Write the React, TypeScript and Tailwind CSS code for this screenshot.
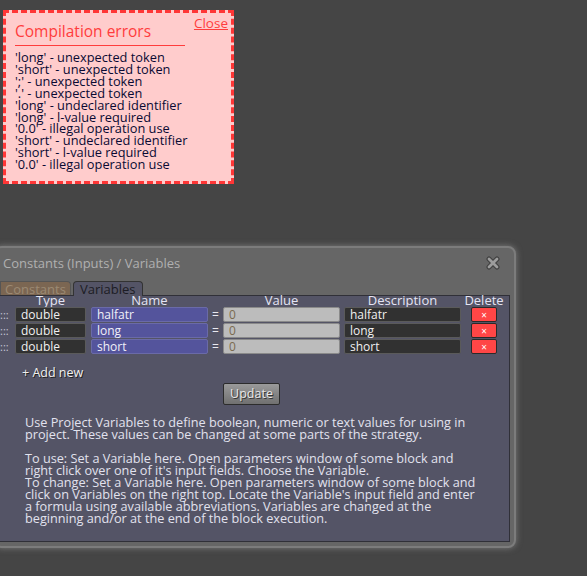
import React from 'react';

const errors = [
  "'long' - unexpected token",
  "'short' - unexpected token",
  "';' - unexpected token",
  "'.' - unexpected token",
  "'long' - undeclared identifier",
  "'long' - l-value required",
  "'0.0' - illegal operation use",
  "'short' - undeclared identifier",
  "'short' - l-value required",
  "'0.0' - illegal operation use",
];

const variables = [
  { type: 'double', name: 'halfatr', value: '0', desc: 'halfatr' },
  { type: 'double', name: 'long', value: '0', desc: 'long' },
  { type: 'double', name: 'short', value: '0', desc: 'short' },
];

const font = { fontFamily: '"Open Sans", "Noto Sans", sans-serif' };

function ErrorBox() {
  return (
    <div className="absolute left-[3px] top-[10px] w-[231px] h-[174px] border-[3px] border-dashed border-[#ff3636] bg-[#ffcccc] pl-[9px] pt-[6px]">
      <a className="absolute right-[3px] top-[0px] text-[13.5px] text-[#ff3c3c] underline cursor-pointer">Close</a>
      <div className="text-[15.5px] leading-[25px] text-[#ff3c3c] w-[170px] border-b border-[#ff3c3c] pb-[1px]">
        Compilation errors
      </div>
      <div className="mt-[6px] text-[12.8px] leading-[11.9px] text-[#0a0a33]">
        {errors.map((e, i) => (
          <div key={i}>{e}</div>
        ))}
      </div>
    </div>
  );
}

function Field({ value, className }: { value: string; className: string }) {
  return (
    <div className={`h-[15px] rounded-[2px] border text-[12px] leading-[13px] pl-[5px] ${className}`}>
      {value}
    </div>
  );
}

function VariablesWindow() {
  return (
    <div className="absolute left-[-6px] top-[246px] w-[522px] h-[302px] rounded-[8px] border-2 border-[#7c7c7c] bg-[#666666] shadow-[0_0_6px_rgba(160,160,160,0.6)] flex flex-col">
      {/* title bar */}
      <div className="relative h-[32px] flex items-center pl-[7px] text-[13px] text-[#b0b0b0]">
        Constants (Inputs) / Variables
        <svg className="absolute right-[14px] top-[8px]" width="14" height="14" viewBox="0 0 14 14">
          <path d="M3 3 L11 11 M11 3 L3 11" stroke="#404040" strokeWidth="5" strokeLinecap="round" />
          <path d="M3 3 L11 11 M11 3 L3 11" stroke="#9c9c9c" strokeWidth="2.8" strokeLinecap="round" />
        </svg>
      </div>

      {/* tabs */}
      <div className="flex items-end h-[15px] pl-[4px] gap-[2px] text-[13px] leading-[14px]">
        <div className="h-[14px] w-[71px] pl-[4px] bg-[#7b6652] text-[#9c8a74] border border-b-0 border-[#555] rounded-tr-[4px]">
          Constants
        </div>
        <div className="h-[15px] w-[70px] pl-[6px] bg-[#545466] text-[#1c1c24] border border-b-0 border-[#333] rounded-t-[4px] relative z-10 -mb-px">
          Variables
        </div>
      </div>

      {/* panel */}
      <div className="ml-[2px] mr-[4px] flex-1 mb-[4px] bg-[#545466] border border-[#303038] pl-[1px] text-[#e4e4f4]">
        <div className="flex text-[13px] leading-[12px] h-[12px] -mt-[2px] ml-[15px] whitespace-nowrap">
          <div className="w-[71px] flex justify-center">Type</div>
          <div className="w-[5px]" />
          <div className="w-[117px] flex justify-center">Name</div>
          <div className="w-[15px]" />
          <div className="w-[117px] flex justify-center">Value</div>
          <div className="w-[4px]" />
          <div className="w-[117px] flex justify-center">Description</div>
          <div className="w-[10px]" />
          <div className="w-[26px] flex justify-center">Delete</div>
        </div>
        <div className="flex flex-col gap-[1px] mt-[1px]">
          {variables.map((v) => (
            <div key={v.name} className="flex items-center h-[15px]">
              <div className="w-[15px] text-[11px] leading-[10px] text-[#c8c8d8]">:::</div>
              <Field value={v.type} className="w-[71px] bg-[#313131] border-[#5a5a5a] text-[#f0f0f0]" />
              <div className="w-[5px]" />
              <Field value={v.name} className="w-[117px] bg-[#54549c] border-[#6a6aa8] text-[#f0f0f8]" />
              <div className="w-[15px] text-center text-[12px] text-[#e8e8f0]">=</div>
              <Field value={v.value} className="w-[117px] bg-[#bcbcbc] border-[#8a8a8a] text-[#7a6a50]" />
              <div className="w-[4px]" />
              <Field value={v.desc} className="w-[117px] bg-[#313131] border-[#5a5a5a] text-[#f0f0f0]" />
              <div className="w-[10px]" />
              <button className="w-[26px] h-[15px] rounded-[2px] bg-[#ff4646] border border-[#2a2a2a] text-white text-[10px] leading-[10px] flex items-center justify-center">
                ×
              </button>
            </div>
          ))}
        </div>

        <div className="mt-[12px] ml-[22px] text-[12.5px] leading-[14px] text-[#f0f0f0] [text-shadow:1px_1px_0_#222]">
          + Add new
        </div>

        <div className="flex justify-center mt-[3px] ml-[-6px]">
          <button className="w-[57px] h-[22px] rounded-[2px] border border-[#2c2c2c] bg-gradient-to-b from-[#9a9a9a] to-[#707070] text-[12.5px] text-[#e8e8e8] [text-shadow:1px_1px_0_#333]">
            Update
          </button>
        </div>

        <div className="mt-[11px] ml-[25px] text-[12.7px] leading-[12px] text-[#e2e2ee] whitespace-nowrap">
          <div>Use Project Variables to define boolean, numeric or text values for using in</div>
          <div>project. These values can be changed at some parts of the strategy.</div>
          <div className="h-[12px]" />
          <div>To use: Set a Variable here. Open parameters window of some block and</div>
          <div>right click over one of it's input fields. Choose the Variable.</div>
          <div>To change: Set a Variable here. Open parameters window of some block and</div>
          <div>click on Variables on the right top. Locate the Variable's input field and enter</div>
          <div>a formula using available abbreviations. Variables are changed at the</div>
          <div>beginning and/or at the end of the block execution.</div>
        </div>
      </div>
    </div>
  );
}

export default function App() {
  return (
    <div className="relative w-[587px] h-[576px] overflow-hidden bg-[#454545]" style={font}>
      <ErrorBox />
      <VariablesWindow />
    </div>
  );
}
